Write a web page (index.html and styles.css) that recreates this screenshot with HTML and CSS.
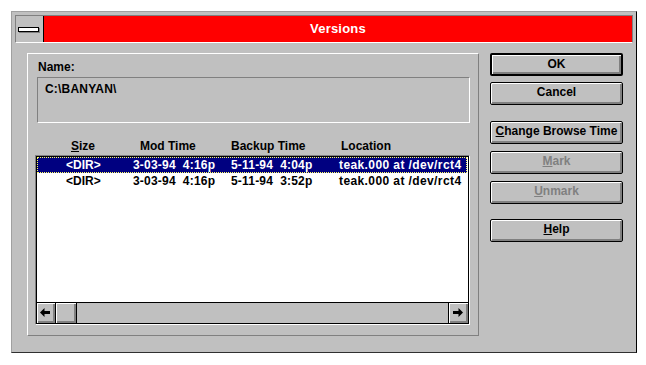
FILE: index.html
```html
<!DOCTYPE html>
<html>
<head>
<meta charset="utf-8">
<link rel="stylesheet" href="styles.css">
</head>
<body>
<div class="window">
  <div class="titlebar">
    <div class="sysmenu"><span class="dash"></span></div>
    <div class="caption">Versions</div>
  </div>
  <div class="client">
    <div class="group">
      <div class="label">Name:</div>
      <div class="namebox">C:\BANYAN\</div>
      <div class="headers">
        <span class="h1"><u>S</u>ize</span>
        <span class="h2">Mod Time</span>
        <span class="h3">Backup Time</span>
        <span class="h4">Location</span>
      </div>
      <div class="listbox">
        <div class="rows">
          <div class="row selected">
            <span class="c1">&lt;DIR&gt;</span>
            <span class="c2">3-03-94  4:16p</span>
            <span class="c3">5-11-94  4:04p</span>
            <span class="c4">teak.000 at /dev/rct4</span>
          </div>
          <div class="row">
            <span class="c1">&lt;DIR&gt;</span>
            <span class="c2">3-03-94  4:16p</span>
            <span class="c3">5-11-94  3:52p</span>
            <span class="c4">teak.000 at /dev/rct4</span>
          </div>
        </div>
        <div class="hscroll">
          <div class="sbtn left"><svg width="10" height="9" viewBox="0 0 10 9"><path d="M0 4.5 L4.5 0 V3 H10 V6 H4.5 V9 Z" fill="#000"/></svg></div>
          <div class="thumb"></div>
          <div class="track"></div>
          <div class="sbtn right"><svg width="10" height="9" viewBox="0 0 10 9"><path d="M10 4.5 L5.5 0 V3 H0 V6 H5.5 V9 Z" fill="#000"/></svg></div>
        </div>
      </div>
    </div>
    <div class="buttons">
      <div class="btn default b-ok">OK</div>
      <div class="btn b-cancel">Cancel</div>
      <div class="btn b-change"><u>C</u>hange Browse Time</div>
      <div class="btn disabled b-mark"><u>M</u>ark</div>
      <div class="btn disabled b-unmark"><u>U</u>nmark</div>
      <div class="btn b-help"><u>H</u>elp</div>
    </div>
  </div>
</div>
</body>
</html>
```
FILE: styles.css
```css
* { box-sizing: border-box; }
body {
  margin: 0;
  background: #fff;
  font-family: "Liberation Sans", Arial, sans-serif;
  font-weight: bold;
  font-size: 12px;
  color: #000;
}
.window {
  margin: 11px 0 0 11px;
  width: 626px;
  height: 342px;
  background: #c0c0c0;
  border: 1px solid;
  border-color: #a0a0a0 #000 #303030 #a0a0a0;
  padding: 3px 3px 0 3px;
  display: flex;
  flex-direction: column;
}
.titlebar {
  height: 28px;
  border: 1px solid #808080;
  border-bottom: 1px solid #fff;
  display: flex;
}
.sysmenu {
  width: 28px;
  background: #c0c0c0;
  border-right: 1px solid #000;
  position: relative;
}
.dash {
  position: absolute;
  left: 2px;
  top: 11px;
  width: 21px;
  height: 5px;
  background: #fff;
  border: 1px solid #000;
  box-shadow: 1px 1px 0 #808080;
}
.caption {
  flex: 1;
  background: #ff0000;
  color: #fff;
  font-size: 13px;
  text-align: center;
  line-height: 26px;
  letter-spacing: 0.2px;
}
.client {
  display: flex;
  padding: 10px 0 0 12px;
}
.group {
  width: 452px;
  height: 283px;
  border: 1px solid;
  border-color: #fff #808080 #808080 #fff;
  padding-top: 6px;
}
.label {
  margin-left: 10px;
  line-height: 14px;
  height: 14px;
}
.namebox {
  margin: 3px 0 0 9px;
  width: 433px;
  height: 46px;
  border: 1px solid;
  border-color: #808080 #fff #fff #808080;
  padding: 4px 0 0 7px;
  line-height: 14px;
  letter-spacing: 0.2px;
}
.headers {
  margin: 16px 0 0 7px;
  height: 14px;
  line-height: 14px;
  display: flex;
  padding-left: 36px;
}
.headers span { display: block; white-space: nowrap; }
.h1 { width: 69px; }
.h2 { width: 91px; }
.h3 { width: 110px; }
.listbox {
  margin: 2px 0 0 7px;
  width: 435px;
  height: 170px;
  border: 1px solid;
  border-color: #808080 #fff #fff #808080;
  display: flex;
  flex-direction: column;
  box-shadow: inset 1px 1px 0 #000, inset -1px -1px 0 #000;
  padding: 1px;
}
.rows {
  flex: 1;
  background: #fff;
}
.row {
  display: flex;
  height: 16px;
  line-height: 17px;
  padding-left: 29px;
  width: 430px;
  white-space: pre;
}
.row span { display: block; }
.row.selected {
  background: #000080;
  color: #fff;
  outline: 1px dotted #ffff60;
  outline-offset: -1px;
}
.c1 { width: 67px; }
.c2 { width: 98px; letter-spacing: 0.2px; }
.c3 { width: 108px; letter-spacing: 0.2px; }
.c4 { letter-spacing: 0.4px; }
.hscroll {
  height: 21px;
  border-top: 1px solid #000;
  display: flex;
  background: #c0c0c0;
}
.sbtn, .thumb {
  width: 19px;
  background: #c0c0c0;
  box-shadow: inset 1px 1px 0 #fff, inset -2px -2px 0 #808080;
  display: flex;
  align-items: center;
  justify-content: center;
}
.sbtn.left { border-right: 1px solid #000; }
.sbtn.left svg { margin: 0 2px 1px 0; }
.thumb { width: 21px; border-right: 1px solid #000; }
.track { flex: 1; }
.sbtn.right { width: 20px; border-left: 1px solid #000; }
.sbtn.right svg { margin: 0 1px 1px 0; }
.buttons {
  margin-left: 11px;
  width: 133px;
  display: flex;
  flex-direction: column;
}
.btn {
  height: 23px;
  border: 1px solid #000;
  border-radius: 2px;
  background: #c0c0c0;
  box-shadow: inset 1px 1px 0 #fff, inset -2px -2px 0 #808080;
  text-align: center;
  line-height: 19px;
  white-space: nowrap;
}
.btn.default {
  border-width: 2px;
  line-height: 18px;
}
.btn.disabled { color: #808080; }
.b-cancel { margin-top: 6px; }
.b-change { margin-top: 16px; }
.b-mark { margin-top: 7px; }
.b-unmark { margin-top: 7px; }
.b-help { margin-top: 15px; }
```
